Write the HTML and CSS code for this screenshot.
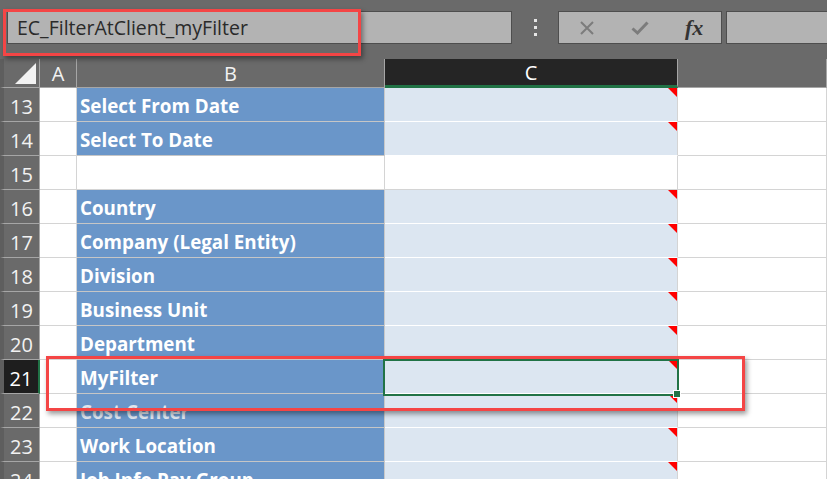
FILE: index.html
```html
<!DOCTYPE html>
<html>
<head>
<meta charset="utf-8">
<link rel="stylesheet" href="styles.css">
</head>
<body>
<div class="app">
  <div class="topbar">
    <div class="namebox">EC_FilterAtClient_myFilter</div>
    <div class="dots"><span></span><span></span><span></span></div>
    <div class="fbtns">
      <svg class="ico" width="16" height="16" viewBox="0 0 16 16"><path d="M2 2 L14 14 M14 2 L2 14" stroke="#7c7c7c" stroke-width="2" fill="none"/></svg>
      <svg class="ico" width="18" height="16" viewBox="0 0 18 16"><path d="M1.5 8.5 L6.5 13 L16.5 2.5" stroke="#7c7c7c" stroke-width="3" fill="none"/></svg>
      <span class="fx">fx</span>
    </div>
    <div class="finput"></div>
  </div>
  <div class="sheet">
    <div class="corner"><span class="tri"></span></div>
    <div class="chead">A</div>
    <div class="chead">B</div>
    <div class="chead csel">C</div>
    <div class="chead"></div>

    <div class="rh">13</div><div class="ca"></div><div class="cb">Select From Date</div><div class="cc"></div><div class="cd"></div>
    <div class="rh">14</div><div class="ca"></div><div class="cb">Select To Date</div><div class="cc"></div><div class="cd"></div>
    <div class="rh">15</div><div class="ca"></div><div class="cw"></div><div class="cw"></div><div class="cd"></div>
    <div class="rh">16</div><div class="ca"></div><div class="cb">Country</div><div class="cc"></div><div class="cd"></div>
    <div class="rh">17</div><div class="ca"></div><div class="cb">Company (Legal Entity)</div><div class="cc"></div><div class="cd"></div>
    <div class="rh">18</div><div class="ca"></div><div class="cb">Division</div><div class="cc"></div><div class="cd"></div>
    <div class="rh">19</div><div class="ca"></div><div class="cb">Business Unit</div><div class="cc"></div><div class="cd"></div>
    <div class="rh">20</div><div class="ca"></div><div class="cb">Department</div><div class="cc"></div><div class="cd"></div>
    <div class="rh rsel">21</div><div class="ca"></div><div class="cb">MyFilter</div><div class="cc"></div><div class="cd"></div>
    <div class="rh">22</div><div class="ca"></div><div class="cb faded">Cost Center</div><div class="cc"></div><div class="cd"></div>
    <div class="rh">23</div><div class="ca"></div><div class="cb">Work Location</div><div class="cc"></div><div class="cd"></div>
    <div class="rh">24</div><div class="ca"></div><div class="cb">Job Info Pay Group</div><div class="cc"></div><div class="cd"></div>
  </div>
  <div class="selbox"></div>
  <div class="handle"></div>
  <div class="hl hl-name"></div>
  <div class="hl hl-row"></div>
</div>
</body>
</html>
```

FILE: styles.css
```css
html, body {
  margin: 0;
  padding: 0;
  width: 827px;
  height: 479px;
  overflow: hidden;
  background: #ffffff;
}
.app {
  position: relative;
  width: 827px;
  height: 479px;
  overflow: hidden;
  font-family: "Open Sans", "DejaVu Sans", sans-serif;
}
.topbar {
  height: 59px;
  background: #6a6a6a;
  display: flex;
  align-items: flex-start;
  padding: 11px 0 0 7px;
  box-sizing: border-box;
}
.namebox {
  width: 505px;
  height: 33px;
  box-sizing: border-box;
  background: #b3b3b3;
  border: 1px solid #4e4e4e;
  color: #2a2a2a;
  font-size: 19.5px;
  line-height: 31px;
  padding-left: 9px;
}
.dots {
  width: 46px;
  height: 33px;
  display: flex;
  flex-direction: column;
  align-items: center;
  justify-content: center;
  gap: 4px;
}
.dots span {
  width: 3px;
  height: 3px;
  background: #e6e6e6;
}
.fbtns {
  width: 164px;
  height: 33px;
  box-sizing: border-box;
  background: #b3b3b3;
  border: 1px solid #4e4e4e;
  display: flex;
  align-items: center;
  padding-left: 20px;
  gap: 36px;
}
.fx {
  font-family: "Liberation Serif", serif;
  font-style: italic;
  font-weight: bold;
  font-size: 22px;
  color: #333333;
  line-height: 22px;
}
.finput {
  flex: 1;
  height: 33px;
  box-sizing: border-box;
  background: #b3b3b3;
  border: 1px solid #4e4e4e;
  margin-left: 4px;
  margin-right: -4px;
}
.sheet {
  display: grid;
  grid-template-columns: 40px 37px 308px 293px 1fr;
  grid-template-rows: 29px repeat(12, 34px);
}
.sheet > div {
  box-sizing: border-box;
  border-right: 1px solid #d4d4d4;
  border-bottom: 1px solid #d4d4d4;
  position: relative;
}
.corner {
  background: #6a6a6a;
  border-left: 4px solid #5e5e5e;
  border-right-color: #a6a6a6 !important;
  border-bottom-color: #a6a6a6 !important;
}
.tri {
  position: absolute;
  right: 3px;
  bottom: 3px;
  width: 0;
  height: 0;
  border-left: 21px solid transparent;
  border-bottom: 21px solid #f2f2f2;
}
.chead {
  background: #6a6a6a;
  color: #f2f2f2;
  font-size: 20px;
  text-align: center;
  line-height: 30px;
  border-right-color: #a6a6a6 !important;
  border-bottom-color: #a6a6a6 !important;
}
.csel {
  background: #252525;
  color: #ffffff;
  border-bottom: 3px solid #217346 !important;
  line-height: 28px;
}
.rh {
  background: #6a6a6a;
  border-left: 4px solid #5e5e5e;
  color: #f2f2f2;
  font-size: 20px;
  display: flex;
  align-items: center;
  justify-content: center;
  border-right-color: #a6a6a6 !important;
  border-bottom-color: #a6a6a6 !important;
  padding-top: 3px;
}
.rsel {
  background: #1e1e1e;
  color: #ffffff;
  border-right: 2px solid #217346 !important;
}
.cb {
  background: #6a96c9;
  color: #ffffff;
  font-weight: bold;
  font-size: 18.8px;
  display: flex;
  align-items: center;
  padding: 2px 0 0 3px;
  white-space: nowrap;
  border-right-color: #c8c8c8 !important;
  border-bottom-color: #c6c6c6 !important;
}
.faded {
  color: #dfe5ee;
}
.cc {
  background: #dce6f1;
  border-bottom-color: #ffffff !important;
}
.cc::after {
  content: "";
  position: absolute;
  top: 0;
  right: 0;
  width: 0;
  height: 0;
  border-left: 9px solid transparent;
  border-top: 9px solid #ff0000;
}
.selbox {
  position: absolute;
  left: 383px;
  top: 359px;
  width: 296px;
  height: 37px;
  box-sizing: border-box;
  border: 2px solid #217346;
}
.handle {
  position: absolute;
  left: 673px;
  top: 390px;
  width: 6px;
  height: 6px;
  background: #217346;
  border: 1px solid #ffffff;
}
.hl {
  position: absolute;
  box-sizing: border-box;
  border: 3px solid #f44545;
  box-shadow: 2px 3px 5px rgba(0, 0, 0, 0.4);
}
.hl-name {
  left: 3px;
  top: 9px;
  width: 358px;
  height: 47px;
}
.hl-row {
  left: 46px;
  top: 356px;
  width: 699px;
  height: 55px;
}
```
